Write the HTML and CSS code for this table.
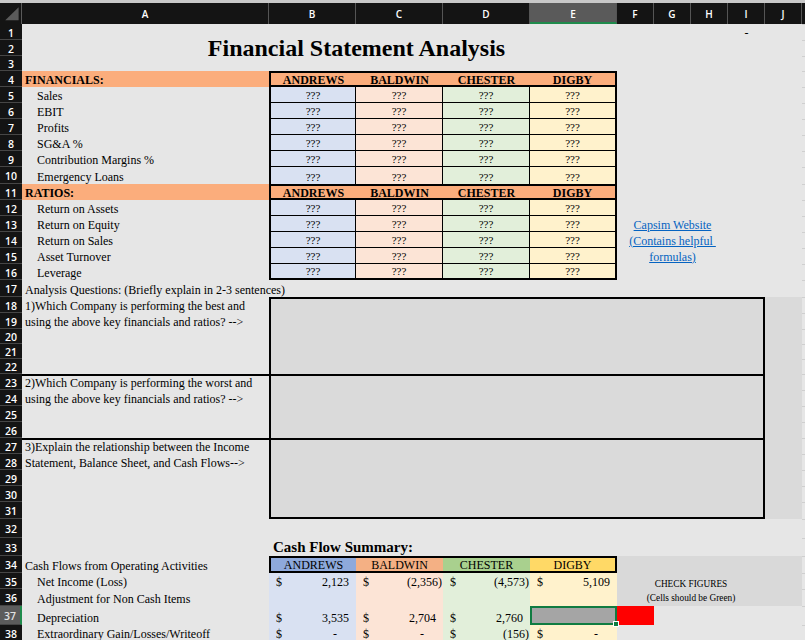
FILE: index.html
```html
<!DOCTYPE html>
<html>
<head>
<meta charset="utf-8">
<title>Financial Statement Analysis</title>
<link rel="stylesheet" href="styles.css">
</head>
<body>
<div class="sheet">
  <div class="topstrip"></div>
  <div class="row colhdr">
    <div class="corner"><svg width="22" height="21" viewBox="0 0 22 21"><polygon points="5.5,17.5 19.5,17.5 19.5,4" fill="#5a5a5a"/></svg></div>
    <div class="ch a">A</div>
    <div class="ch b">B</div>
    <div class="ch c">C</div>
    <div class="ch d">D</div>
    <div class="ch e sel">E</div>
    <div class="ch f">F</div>
    <div class="ch g">G</div>
    <div class="ch h">H</div>
    <div class="ch i">I</div>
    <div class="ch j">J</div>
    <div class="ch k"></div>
  </div>

  <div class="row h16"><div class="rh">1</div><div class="i cell cen">-</div></div>
  <div class="row h16"><div class="rh">2</div><div class="a-g title">Financial Statement Analysis</div></div>
  <div class="row h15"><div class="rh">3</div></div>

  <div class="row h16"><div class="rh">4</div>
    <div class="a cell band">FINANCIALS:</div>
    <div class="b cell hd hl">ANDREWS</div>
    <div class="c cell hd">BALDWIN</div>
    <div class="d cell hd">CHESTER</div>
    <div class="e cell hd hr">DIGBY</div>
  </div>
  <div class="row h16"><div class="rh">5</div>
    <div class="a cell ind">Sales</div>
    <div class="b cell q blu">???</div><div class="c cell q pch">???</div><div class="d cell q grn">???</div><div class="e cell q yel">???</div>
  </div>
  <div class="row h16"><div class="rh">6</div>
    <div class="a cell ind">EBIT</div>
    <div class="b cell q blu">???</div><div class="c cell q pch">???</div><div class="d cell q grn">???</div><div class="e cell q yel">???</div>
  </div>
  <div class="row h16"><div class="rh">7</div>
    <div class="a cell ind">Profits</div>
    <div class="b cell q blu">???</div><div class="c cell q pch">???</div><div class="d cell q grn">???</div><div class="e cell q yel">???</div>
  </div>
  <div class="row h16"><div class="rh">8</div>
    <div class="a cell ind">SG&amp;A %</div>
    <div class="b cell q blu">???</div><div class="c cell q pch">???</div><div class="d cell q grn">???</div><div class="e cell q yel">???</div>
  </div>
  <div class="row h16"><div class="rh">9</div>
    <div class="a cell ind">Contribution Margins %</div>
    <div class="b cell q blu">???</div><div class="c cell q pch">???</div><div class="d cell q grn">???</div><div class="e cell q yel">???</div>
  </div>
  <div class="row h17"><div class="rh">10</div>
    <div class="a cell ind">Emergency Loans</div>
    <div class="b cell q nb blu">???</div><div class="c cell q nb pch">???</div><div class="d cell q nb grn">???</div><div class="e cell q nb yel">???</div>
  </div>

  <div class="row h16"><div class="rh">11</div>
    <div class="a cell band">RATIOS:</div>
    <div class="b cell hd hl">ANDREWS</div>
    <div class="c cell hd">BALDWIN</div>
    <div class="d cell hd">CHESTER</div>
    <div class="e cell hd hr">DIGBY</div>
  </div>
  <div class="row h16"><div class="rh">12</div>
    <div class="a cell ind">Return on Assets</div>
    <div class="b cell q blu">???</div><div class="c cell q pch">???</div><div class="d cell q grn">???</div><div class="e cell q yel">???</div>
  </div>
  <div class="row h16"><div class="rh">13</div>
    <div class="a cell ind">Return on Equity</div>
    <div class="b cell q blu">???</div><div class="c cell q pch">???</div><div class="d cell q grn">???</div><div class="e cell q yel">???</div>
    <div class="f-h cell cen link"><span>Capsim Website</span></div>
  </div>
  <div class="row h16"><div class="rh">14</div>
    <div class="a cell ind">Return on Sales</div>
    <div class="b cell q blu">???</div><div class="c cell q pch">???</div><div class="d cell q grn">???</div><div class="e cell q yel">???</div>
    <div class="f-h cell cen link"><span>(Contains helpful&nbsp;</span></div>
  </div>
  <div class="row h16"><div class="rh">15</div>
    <div class="a cell ind">Asset Turnover</div>
    <div class="b cell q blu">???</div><div class="c cell q pch">???</div><div class="d cell q grn">???</div><div class="e cell q yel">???</div>
    <div class="f-h cell cen link"><span>formulas)</span></div>
  </div>
  <div class="row h16"><div class="rh">16</div>
    <div class="a cell ind">Leverage</div>
    <div class="b cell q last blu">???</div><div class="c cell q last pch">???</div><div class="d cell q last grn">???</div><div class="e cell q last yel">???</div>
  </div>

  <div class="row h17"><div class="rh">17</div>
    <div class="a cell pl">Analysis Questions: (Briefly explain in 2-3 sentences)</div>
  </div>

  <div class="row h16"><div class="rh">18</div>
    <div class="a cell pl">1)Which Company is performing the best and</div>
    <div class="b-i box bt"></div><div class="j gr"></div>
  </div>
  <div class="row h16"><div class="rh">19</div>
    <div class="a cell pl">using the above key financials and ratios? --&gt;</div>
    <div class="b-i box"></div><div class="j gr"></div>
  </div>
  <div class="row h15"><div class="rh">20</div><div class="b-i box"></div><div class="j gr"></div></div>
  <div class="row h15"><div class="rh">21</div><div class="b-i box"></div><div class="j gr"></div></div>
  <div class="row h15"><div class="rh">22</div><div class="b-i box"></div><div class="j gr"></div></div>

  <div class="row h16"><div class="rh">23</div>
    <div class="a cell pl bt">2)Which Company is performing the worst and</div>
    <div class="b-i box bt"></div><div class="j gr"></div>
  </div>
  <div class="row h16"><div class="rh">24</div>
    <div class="a cell pl">using the above key financials and ratios? --&gt;</div>
    <div class="b-i box"></div><div class="j gr"></div>
  </div>
  <div class="row h16"><div class="rh">25</div><div class="b-i box"></div><div class="j gr"></div></div>
  <div class="row h16"><div class="rh">26</div><div class="b-i box"></div><div class="j gr"></div></div>

  <div class="row h16"><div class="rh">27</div>
    <div class="a cell pl bt">3)Explain the relationship between the Income</div>
    <div class="b-i box bt"></div><div class="j gr"></div>
  </div>
  <div class="row h16"><div class="rh">28</div>
    <div class="a cell pl">Statement, Balance Sheet, and Cash Flows--&gt;</div>
    <div class="b-i box"></div><div class="j gr"></div>
  </div>
  <div class="row h16"><div class="rh">29</div><div class="b-i box"></div><div class="j gr"></div></div>
  <div class="row h16"><div class="rh">30</div><div class="b-i box"></div><div class="j gr"></div></div>
  <div class="row h17"><div class="rh">31</div><div class="b-i box bb"></div><div class="j gr"></div></div>

  <div class="row h19"><div class="rh">32</div></div>
  <div class="row h18"><div class="rh">33</div>
    <div class="b cell cftitle">Cash Flow Summary:</div>
  </div>
  <div class="row h17"><div class="rh">34</div>
    <div class="a cell pl">Cash Flows from Operating Activities</div>
    <div class="b cell cfh hl blu2">ANDREWS</div>
    <div class="c cell cfh pch2">BALDWIN</div>
    <div class="d cell cfh grn2">CHESTER</div>
    <div class="e cell cfh hr yel2">DIGBY</div>
    <div class="f-j chk"></div>
  </div>
  <div class="row h16"><div class="rh">35</div>
    <div class="a cell ind">Net Income (Loss)</div>
    <div class="b cell m blu"><span>$</span><span>2,123</span></div>
    <div class="c cell m pch"><span>$</span><span class="n">(2,356)</span></div>
    <div class="d cell m grn"><span>$</span><span class="n">(4,573)</span></div>
    <div class="e cell m yel"><span>$</span><span>5,109</span></div>
    <div class="f-i cell cen chk chk1">CHECK FIGURES</div><div class="j chk"></div>
  </div>
  <div class="row h17"><div class="rh">36</div>
    <div class="a cell ind">Adjustment for Non Cash Items</div>
    <div class="b blu"></div><div class="c pch"></div><div class="d grn"></div><div class="e yel"></div>
    <div class="f-i cell cen chk chk2">(Cells should be Green)</div><div class="j chk"></div>
  </div>
  <div class="row h19"><div class="rh rsel">37</div>
    <div class="a cell ind">Depreciation</div>
    <div class="b cell m blu"><span>$</span><span>3,535</span></div>
    <div class="c cell m pch"><span>$</span><span>2,704</span></div>
    <div class="d cell m grn"><span>$</span><span>2,760</span></div>
    <div class="e selcell"><span class="handle"></span></div>
    <div class="f red"></div>
  </div>
  <div class="row h16"><div class="rh">38</div>
    <div class="a cell ind">Extraordinary Gain/Losses/Writeoff</div>
    <div class="b cell m blu"><span>$</span><span class="z">-</span></div>
    <div class="c cell m pch"><span>$</span><span class="z">-</span></div>
    <div class="d cell m grn"><span>$</span><span class="n">(156)</span></div>
    <div class="e cell m yel"><span>$</span><span class="z">-</span></div>
  </div>
</div>
</body>
</html>
```

FILE: styles.css
```css
* { box-sizing: border-box; margin: 0; padding: 0; }

html, body {
  background: #e6e6e6;
  font-family: "Liberation Serif", "Times New Roman", serif;
  color: #000;
  overflow: hidden;
}

.sheet {
  display: flex;
  flex-direction: column;
  width: 805px;
}

.topstrip { height: 3px; background: #c9c9c9; flex: none; }

.row {
  display: grid;
  grid-template-columns: 22px 247px 87px 87px 87px 87px 37px 37px 37px 37px 37px 1fr;
  grid-template-rows: minmax(0, 1fr);
  flex: none;
  background: linear-gradient(#cfcfcf, #cfcfcf) right top / 3px 1px no-repeat;
}

.h15 { height: 15px; }
.h16 { height: 16px; }
.h17 { height: 17px; }
.h18 { height: 18px; }
.h19 { height: 19px; }
.h20 { height: 20px; }

/* column placement */
.a { grid-column: 2; }
.b { grid-column: 3; }
.c { grid-column: 4; }
.d { grid-column: 5; }
.e { grid-column: 6; }
.f { grid-column: 7; }
.g { grid-column: 8; }
.h { grid-column: 9; }
.i { grid-column: 10; }
.j { grid-column: 11; }
.k { grid-column: 12; }
.a-g { grid-column: 2 / 9; }
.f-h { grid-column: 7 / 10; }
.f-i { grid-column: 7 / 11; }
.f-j { grid-column: 7 / 12; }
.b-i { grid-column: 3 / 11; }

/* headers */
.colhdr { height: 21px; background: #141414; }
.corner {
  grid-column: 1;
  border-right: 1px solid #5a5a5a;
  display: flex;
}
.ch {
  color: #fff;
  font: 600 10px "Open Sans", sans-serif;
  display: flex;
  align-items: center;
  justify-content: center;
  border-right: 1px solid #555;
}
.ch.sel { background: #5a5a5a; border-bottom: 2px solid #1f8b4c; padding-top: 2px; }
.ch.k { border-right: 0; }

.rh {
  grid-column: 1;
  background: #141414;
  color: #fff;
  font: 600 10.5px "Open Sans", sans-serif;
  display: flex;
  align-items: center;
  justify-content: center;
  padding-top: 2px;
  border-bottom: 1px solid #464646;
}
.rh.rsel { background: #5c5c5c; color: #e2e2e2; border-right: 2px solid #1f8b4c; }

/* cells */
.cell {
  display: flex;
  align-items: flex-end;
  line-height: 14px;
  font-size: 12px;
  white-space: nowrap;
  min-width: 0;
  min-height: 0;
}
.cen { justify-content: center; }
.pl { padding-left: 3px; }
.ind { padding-left: 15px; }

.title {
  display: flex;
  justify-content: center;
  align-items: flex-end;
  font-size: 24px;
  font-weight: bold;
  line-height: 15px;
  white-space: nowrap;
  min-height: 0;
}

.band { background: #fbad7c; padding-left: 3px; font-weight: bold; }
.hd {
  background: #fbad7c;
  font-weight: bold;
  justify-content: center;
  align-items: center;
  padding-top: 1px;
  border-top: 2px solid #000;
  border-bottom: 2px solid #000;
}
.hl { border-left: 2px solid #000; }
.hr { border-right: 2px solid #000; }

.q {
  justify-content: center;
  font-size: 11px;
  line-height: 13px;
  border-right: 1px solid #000;
  border-bottom: 1px solid #000;
}
.b.q { border-left: 2px solid #000; }
.e.q { border-right: 2px solid #000; }
.q.nb { border-bottom: 0; }
.q.last { border-bottom: 2px solid #000; }

.blu { background: #d9e1f2; }
.pch { background: #fce4d6; }
.grn { background: #e2efda; }
.yel { background: #fff2cc; }
.blu2 { background: #8ea9db; }
.pch2 { background: #f4b084; }
.grn2 { background: #a9d08e; }
.yel2 { background: #ffd966; }

.link { color: #0563c1; font-size: 12px; }
.link span { text-decoration: underline; }

.box {
  background: #dadada;
  border-left: 2px solid #000;
  border-right: 2px solid #000;
}
.bt { border-top: 2px solid #000; }
.bb { border-bottom: 2px solid #000; }
.gr { background: #dadada; }

.cftitle { font-size: 15px; font-weight: bold; padding-left: 4px; line-height: 17px; }
.cfh {
  justify-content: center;
  align-items: center;
  padding-top: 1px;
  border-top: 2px solid #000;
  border-bottom: 2px solid #000;
}

.chk { background: #d9d9d9; }
.chk1, .chk2 { font-size: 9.3px; line-height: 10px; }
.chk2 { padding-bottom: 3px; }

.m { justify-content: space-between; padding: 0 7px; }
.m .n { margin-right: -6px; }
.m .z { margin-right: 12px; }

.selcell {
  position: relative;
  background: #a5a5a5;
  border: 2px solid #107c41;
}
.handle {
  position: absolute;
  right: -4px;
  bottom: -4px;
  width: 6px;
  height: 6px;
  background: #107c41;
  border: 1px solid #fff;
}
.red { background: #ff0000; }
```
